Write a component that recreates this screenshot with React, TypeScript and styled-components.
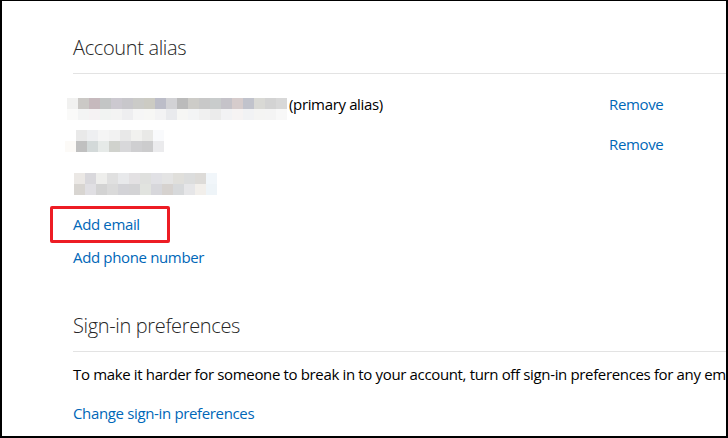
import styled, { createGlobalStyle } from "styled-components"

const GlobalStyle = createGlobalStyle`
  html, body {
    margin: 0;
    padding: 0;
    background: #ffffff;
  }
  body {
    font-family: "Open Sans", "Noto Sans", sans-serif;
  }
`

// blurred e-mail addresses, cell by cell (11px squares)
const aliases = [
	{
		left: -6,
		shift: 5,
		remove: true,
		suffix: "(primary alias)",
		cells: [
			["#f1f1f0", "#cbc9c6", "#c6b9bd", "#c3c5c5", "#ccc9d0", "#c8c7cb", "#cbcbc8", "#cccbc3", "#bcbdc8", "#d2d2d5", "#bbbbbb", "#cdccc8", "#c8c8c8", "#c9cccc", "#c5c3c9", "#d6cccc", "#c1c3cc", "#d9d9d5", "#d3d3d3", "#d8d8d8"],
			["#fafaf9", "#f3f4f4", "#f5f2f3", "#f1f3f2", "#f3f3f3", "#eeeef0", "#f6f6f6", "#f7f7f5", "#f3f3f4", "#e9eaed", "#f6f6f4", "#f3f4f5", "#f0f0f0", "#ebebeb", "#f2f2f4", "#f6f3f3", "#f1f2f4", "#f4f4f3", "#f4f4f4", "#f8f8f8"],
		],
	},
	{
		left: -8,
		shift: -3,
		remove: true,
		cells: [
			["#ffffff", "#e9e9e9", "#eeeff1", "#f5f5f5", "#f2f2f2", "#e8e8e8", "#f1f1ef", "#e9e9e7", "#f9fafc"],
			["#fcfaf7", "#c0c0c0", "#d3d9d9", "#e6eae8", "#d0d2cd", "#d8d8da", "#cfcfd1", "#cccccd", "#ebebed"],
		],
	},
	{
		left: 1,
		shift: 0,
		remove: false,
		cells: [
			["#ebe8e5", "#d9d8dc", "#eeeeec", "#e0e0e0", "#e8e9eb", "#e3e1e3", "#dfe0de", "#e1e1e5", "#e4e4e4", "#e0dfdb", "#dcdddd", "#dddbd8", "#f1f6fa"],
			["#d8d5d1", "#e0dfe3", "#d3d3d3", "#dadada", "#d3d3d7", "#d3d3d5", "#e1e3df", "#d7d7db", "#d6d2cf", "#d7d9db", "#e6e6e8", "#f2efeb", "#eef4f8"],
		],
	},
]

export default function App() {
	return (
		<>
			<GlobalStyle />
			<Frame>
				<Section>
					<Heading>Account alias</Heading>
					<Divider />
					<AliasList>
						{aliases.map((alias, i) => (
							<AliasRow key={i}>
								<AliasCell>
									<Mosaic $left={alias.left} $shift={alias.shift} $cols={alias.cells[0].length}>
										{alias.cells.flat().map((c, j) => (
											<Pixel key={j} $c={c} />
										))}
									</Mosaic>
									{alias.suffix && <AliasNote>{alias.suffix}</AliasNote>}
								</AliasCell>
								{alias.remove && <Link href="#">Remove</Link>}
							</AliasRow>
						))}
					</AliasList>
					<Actions>
						<Highlighted>
							<Link href="#">Add email</Link>
							<RedBox />
						</Highlighted>
						<PlainAction>
							<Link href="#">Add phone number</Link>
						</PlainAction>
					</Actions>
				</Section>

				<Section $gap={43}>
					<Heading>Sign-in preferences</Heading>
					<Divider />
					<Paragraph>
						To make it harder for someone to break in to your account, turn off sign-in preferences for any email, phone number, or Skype name you don't use to sign in.
					</Paragraph>
					<Footer>
						<Link href="#">Change sign-in preferences</Link>
					</Footer>
				</Section>
			</Frame>
		</>
	)
}

const Frame = styled.div`
  width: 728px;
  height: 438px;
  box-sizing: border-box;
  border-style: solid;
  border-color: #000000;
  border-width: 1px 2px 2px 2px;
  background: #ffffff;
  overflow: hidden;
  padding: 33px 0 0 71px;
  color: #000000;
`

const Section = styled.section<{ $gap?: number }>`
  display: flex;
  flex-direction: column;
  margin-top: ${(p) => p.$gap ?? 0}px;
`

const Heading = styled.h2`
  margin: 0;
  font-size: 20px;
  line-height: 28px;
  font-weight: 300;
  letter-spacing: -0.35px;
  color: #262626;
`

const Divider = styled.div`
  height: 1px;
  background: #e3e3e3;
  margin-top: 11px;
  margin-right: -10px;
`

const AliasList = styled.div`
  display: flex;
  flex-direction: column;
  margin-top: 10px;
  width: 600px;
`

const AliasRow = styled.div`
  display: grid;
  grid-template-columns: 536px auto;
  align-items: center;
  height: 40px;
`

const AliasCell = styled.div`
  display: flex;
  align-items: center;
`

const Mosaic = styled.div<{ $left: number; $shift: number; $cols: number }>`
  display: grid;
  grid-template-columns: repeat(${(p) => p.$cols}, 11px);
  grid-auto-rows: 11px;
  margin-left: ${(p) => p.$left}px;
  margin-top: ${(p) => (p.$shift > 0 ? p.$shift * 2 : 0)}px;
  margin-bottom: ${(p) => (p.$shift < 0 ? -p.$shift * 2 : 0)}px;
`

const Pixel = styled.span<{ $c: string }>`
  background: ${(p) => p.$c};
`

const AliasNote = styled.span`
  font-size: 15px;
  line-height: 20px;
  letter-spacing: -0.35px;
  margin-left: 2px;
`

const Link = styled.a`
  font-size: 15px;
  line-height: 20px;
  letter-spacing: -0.35px;
  color: #0067b8;
  text-decoration: none;
  white-space: nowrap;
`

const Actions = styled.div`
  display: flex;
  flex-direction: column;
`

const Highlighted = styled.div`
  position: relative;
  display: flex;
  align-items: center;
  height: 39px;
`

const RedBox = styled.div`
  position: absolute;
  left: -23px;
  top: 2px;
  width: 120px;
  height: 37px;
  box-sizing: border-box;
  border: 3px solid #ed1c24;
  border-radius: 2px;
  pointer-events: none;
`

const PlainAction = styled.div`
  display: flex;
  align-items: center;
  height: 24px;
  margin-top: 2px;
`

const Paragraph = styled.p`
  margin: 10px 0 0;
  font-size: 15px;
  line-height: 24px;
  letter-spacing: -0.35px;
  white-space: nowrap;
`

const Footer = styled.div`
  margin-top: 15px;
  display: flex;
  align-items: center;
  height: 24px;
`
